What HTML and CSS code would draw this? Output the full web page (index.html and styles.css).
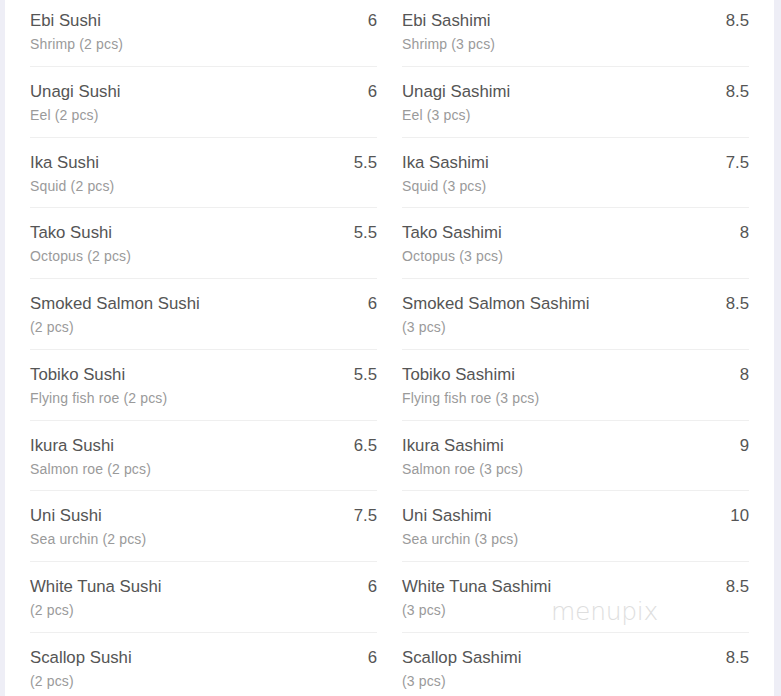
FILE: index.html
```html
<!DOCTYPE html>
<html>
<head>
<meta charset="utf-8">
<link rel="stylesheet" href="styles.css">
</head>
<body>
<div class="card">
  <div class="menu">
    <div class="col">
      <div class="item"><div class="info"><div class="name">Ebi Sushi</div><div class="desc">Shrimp (2 pcs)</div></div><div class="price">6</div></div>
      <div class="item"><div class="info"><div class="name">Unagi Sushi</div><div class="desc">Eel (2 pcs)</div></div><div class="price">6</div></div>
      <div class="item"><div class="info"><div class="name">Ika Sushi</div><div class="desc">Squid (2 pcs)</div></div><div class="price">5.5</div></div>
      <div class="item"><div class="info"><div class="name">Tako Sushi</div><div class="desc">Octopus (2 pcs)</div></div><div class="price">5.5</div></div>
      <div class="item"><div class="info"><div class="name">Smoked Salmon Sushi</div><div class="desc">(2 pcs)</div></div><div class="price">6</div></div>
      <div class="item"><div class="info"><div class="name">Tobiko Sushi</div><div class="desc">Flying fish roe (2 pcs)</div></div><div class="price">5.5</div></div>
      <div class="item"><div class="info"><div class="name">Ikura Sushi</div><div class="desc">Salmon roe (2 pcs)</div></div><div class="price">6.5</div></div>
      <div class="item"><div class="info"><div class="name">Uni Sushi</div><div class="desc">Sea urchin (2 pcs)</div></div><div class="price">7.5</div></div>
      <div class="item"><div class="info"><div class="name">White Tuna Sushi</div><div class="desc">(2 pcs)</div></div><div class="price">6</div></div>
      <div class="item"><div class="info"><div class="name">Scallop Sushi</div><div class="desc">(2 pcs)</div></div><div class="price">6</div></div>
    </div>
    <div class="col">
      <div class="item"><div class="info"><div class="name">Ebi Sashimi</div><div class="desc">Shrimp (3 pcs)</div></div><div class="price">8.5</div></div>
      <div class="item"><div class="info"><div class="name">Unagi Sashimi</div><div class="desc">Eel (3 pcs)</div></div><div class="price">8.5</div></div>
      <div class="item"><div class="info"><div class="name">Ika Sashimi</div><div class="desc">Squid (3 pcs)</div></div><div class="price">7.5</div></div>
      <div class="item"><div class="info"><div class="name">Tako Sashimi</div><div class="desc">Octopus (3 pcs)</div></div><div class="price">8</div></div>
      <div class="item"><div class="info"><div class="name">Smoked Salmon Sashimi</div><div class="desc">(3 pcs)</div></div><div class="price">8.5</div></div>
      <div class="item"><div class="info"><div class="name">Tobiko Sashimi</div><div class="desc">Flying fish roe (3 pcs)</div></div><div class="price">8</div></div>
      <div class="item"><div class="info"><div class="name">Ikura Sashimi</div><div class="desc">Salmon roe (3 pcs)</div></div><div class="price">9</div></div>
      <div class="item"><div class="info"><div class="name">Uni Sashimi</div><div class="desc">Sea urchin (3 pcs)</div></div><div class="price">10</div></div>
      <div class="item"><div class="info"><div class="name">White Tuna Sashimi</div><div class="desc">(3 pcs)</div></div><div class="price">8.5</div></div>
      <div class="item"><div class="info"><div class="name">Scallop Sashimi</div><div class="desc">(3 pcs)</div></div><div class="price">8.5</div></div>
    </div>
  </div>
  <div class="watermark">menupix</div>
</div>
</body>
</html>
```
FILE: styles.css
```css
html, body {
  margin: 0;
  padding: 0;
  background: #eeeef6;
  overflow: hidden;
  height: 696px;
}
.card {
  position: relative;
  margin: 0 7px 0 5px;
  background: #fff;
  height: 696px;
  overflow: hidden;
  font-family: "Liberation Sans", Arial, sans-serif;
}
.menu {
  display: grid;
  grid-template-columns: 347px 347px;
  column-gap: 25px;
  padding: 0 25px;
  margin-top: -4px;
}
.item {
  display: flex;
  justify-content: space-between;
  align-items: flex-start;
  padding: 12px 0 9.75px;
  border-bottom: 1px solid #efefef;
}
.name {
  font-size: 16.8px;
  line-height: 22px;
  padding-top: 2px;
  color: #555;
}
.desc {
  font-size: 14px;
  line-height: 24px;
  color: #9a9a9a;
  letter-spacing: 0.15px;
}
.price {
  font-size: 16.8px;
  line-height: 22px;
  padding-top: 2px;
  color: #555;
}
.watermark {
  position: absolute;
  left: 546px;
  top: 597px;
  font-family: "DejaVu Sans", sans-serif;
  font-weight: 200;
  font-size: 25px;
  letter-spacing: -0.3px;
  color: #dedede;
}
```
